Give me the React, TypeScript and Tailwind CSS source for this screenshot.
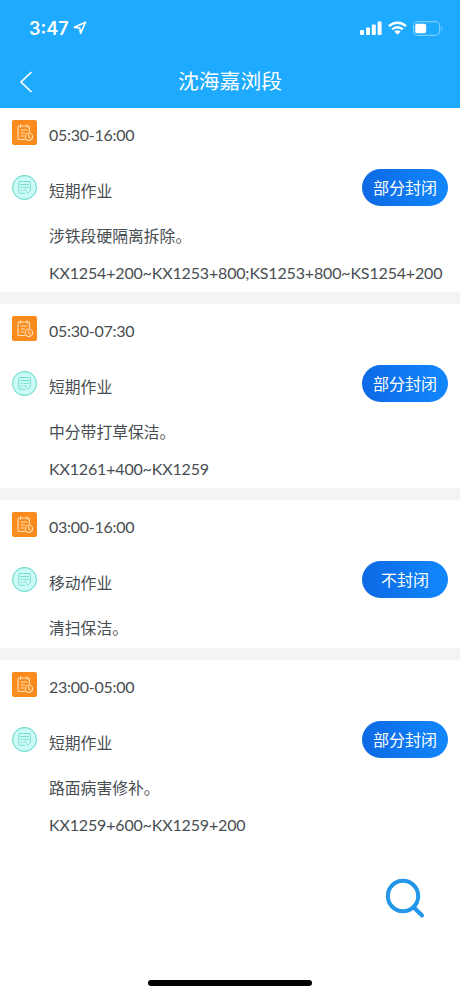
import React from 'react';

type Job = {
  time: string;
  type: string;
  status: string;
  description: string;
  location?: string;
};

const JOBS: Job[] = [
  {
    time: '05:30-16:00',
    type: '短期作业',
    status: '部分封闭',
    description: '涉铁段硬隔离拆除。',
    location: 'KX1254+200~KX1253+800;KS1253+800~KS1254+200',
  },
  {
    time: '05:30-07:30',
    type: '短期作业',
    status: '部分封闭',
    description: '中分带打草保洁。',
    location: 'KX1261+400~KX1259',
  },
  {
    time: '03:00-16:00',
    type: '移动作业',
    status: '不封闭',
    description: '清扫保洁。',
  },
  {
    time: '23:00-05:00',
    type: '短期作业',
    status: '部分封闭',
    description: '路面病害修补。',
    location: 'KX1259+600~KX1259+200',
  },
];

const ScheduleIcon = () => (
  <svg width="25" height="25" viewBox="0 0 25 25" fill="none" className="shrink-0">
    <rect width="25" height="25" rx="2" fill="#fb8b1c" />
    <g stroke="#ffe3bd" strokeWidth="1.1" strokeLinecap="round" strokeLinejoin="round">
      <path d="M12.5 19.5H7a1 1 0 0 1-1-1V7a1 1 0 0 1 1-1h9.5a1 1 0 0 1 1 1v4.5" />
      <path d="M8.5 4.8v2.4M15 4.8v2.4M9 10h6M9 13h3.5M9 16h2.5" />
      <circle cx="16.9" cy="16.7" r="3.7" />
      <path d="M16.7 14.8v2.1l1.7 1" />
    </g>
  </svg>
);

const TypeIcon = () => (
  <svg width="25" height="25" viewBox="0 0 25 25" fill="none" className="shrink-0">
    <circle cx="12.5" cy="12.5" r="11.9" fill="#ccfaf5" stroke="#72dccd" strokeWidth="1.1" />
    <g stroke="#75ded2" strokeWidth="1" strokeLinecap="round" strokeLinejoin="round">
      <path d="M13 18.3H8a1.2 1.2 0 0 1-1.2-1.2V7.7A1.2 1.2 0 0 1 8 6.5h9.2a1.2 1.2 0 0 1 1.2 1.2v7" />
      <path d="M9 9.5h7.5M9 12.3h1M11.8 12.3h4.7M9 15h1M11.8 15h2.7M14.8 17l1.2 1.2 2.4-2.7" />
    </g>
  </svg>
);

const StatusBar = () => (
  <div className="flex h-14 items-center justify-between pl-[29px] pr-[17px] text-white">
    <div className="flex items-center gap-[4px]">
      <span className="pt-px font-['Inter','Liberation_Sans',sans-serif] text-[18px] font-semibold leading-none">
        3:47
      </span>
      <svg width="14" height="14" viewBox="0 0 14 14" fill="none" stroke="white" strokeWidth="1.7" strokeLinejoin="round">
        <path d="M12.5 1.2 1.4 6.3l5.4.7.8 5.5z" />
      </svg>
    </div>
    <div className="flex items-center gap-[6px]">
      <svg width="22" height="14" viewBox="0 0 22 14" fill="white">
        <rect x="0" y="9" width="4" height="5" rx="1" />
        <rect x="6" y="6.5" width="4" height="7.5" rx="1" />
        <rect x="11.8" y="3.5" width="4" height="10.5" rx="1" />
        <rect x="17.6" y="0.5" width="4" height="13.5" rx="1" />
      </svg>
      <svg width="19" height="14" viewBox="0 0 19 14" fill="none" stroke="white" strokeWidth="2.5">
        <path d="M1 5.1a12.2 12.2 0 0 1 17 0" />
        <path d="M4.2 8.3a7.6 7.6 0 0 1 10.6 0" />
        <path d="M9.5 13.8 6.4 10.6a4.5 4.5 0 0 1 6.2 0z" fill="white" stroke="none" />
      </svg>
      <svg width="30" height="15" viewBox="0 0 30 15" fill="none">
        <rect x="0.6" y="0.6" width="26" height="13.8" rx="4" stroke="#79cdff" strokeWidth="1.1" />
        <rect x="2.2" y="2.7" width="11" height="9.6" rx="1.8" fill="white" />
        <path d="M28.2 5.2c1.5.8 1.5 3.8 0 4.6z" fill="#79cdff" />
      </svg>
    </div>
  </div>
);

const Header = () => (
  <header className="h-[108px] bg-[#1daaff]">
    <StatusBar />
    <div className="grid h-[50px] grid-cols-[60px_1fr_60px] items-center text-white">
      <svg width="14" height="22" viewBox="0 0 14 22" fill="none" stroke="white" strokeWidth="1.7" className="ml-[19px] mt-[2px]">
        <path d="M12.5 1 2 11l10.5 10" />
      </svg>
      <h1 className="text-center text-[20.8px] leading-none">沈海嘉浏段</h1>
    </div>
  </header>
);

const JobCard: React.FC<{ job: Job }> = ({ job }) => (
  <section className="bg-white pl-3 pr-3 pb-px text-[16px] text-[#484d51]">
    <div className="flex h-[49px] items-center gap-3">
      <ScheduleIcon />
      <span className="pt-[5px] tracking-[-0.26px]">{job.time}</span>
    </div>
    <div className="flex h-[61px] items-center gap-3">
      <TypeIcon />
      <span className="grow pt-[7px] text-[15.8px]">{job.type}</span>
      <button className="h-[37px] w-[86px] rounded-full bg-linear-to-r from-[#0e69e5] to-[#1287fc] text-[16px] leading-none text-white">
        {job.status}
      </button>
    </div>
    <p className="h-[37px] pl-[37px] text-[15.8px] leading-[35px]">{job.description}</p>
    {job.location && (
      <p className="h-[36px] whitespace-nowrap pl-[37px] leading-[36px] tracking-[-0.16px]">{job.location}</p>
    )}
  </section>
);

export default function App() {
  return (
    <div className="flex h-[996px] w-[460px] flex-col overflow-hidden bg-white font-['Lato','Noto_Sans_CJK_SC',sans-serif]">
      <Header />
      <main className="flex flex-col gap-3 bg-[#f4f4f4]">
        {JOBS.map((job) => (
          <JobCard key={job.time} job={job} />
        ))}
      </main>
      <div className="flex grow flex-col items-end pr-[34px] pt-[34px]">
        <button aria-label="search">
          <svg width="42" height="42" viewBox="0 0 42 42" fill="none" stroke="#2296e8" strokeWidth="4" strokeLinecap="round">
            <circle cx="19" cy="18" r="15.2" />
            <path d="M30 29.5 38 37.5" />
          </svg>
        </button>
      </div>
      <div className="mb-[10px] ml-[148px] h-[6px] w-[164px] rounded-full bg-black" />
    </div>
  );
}
